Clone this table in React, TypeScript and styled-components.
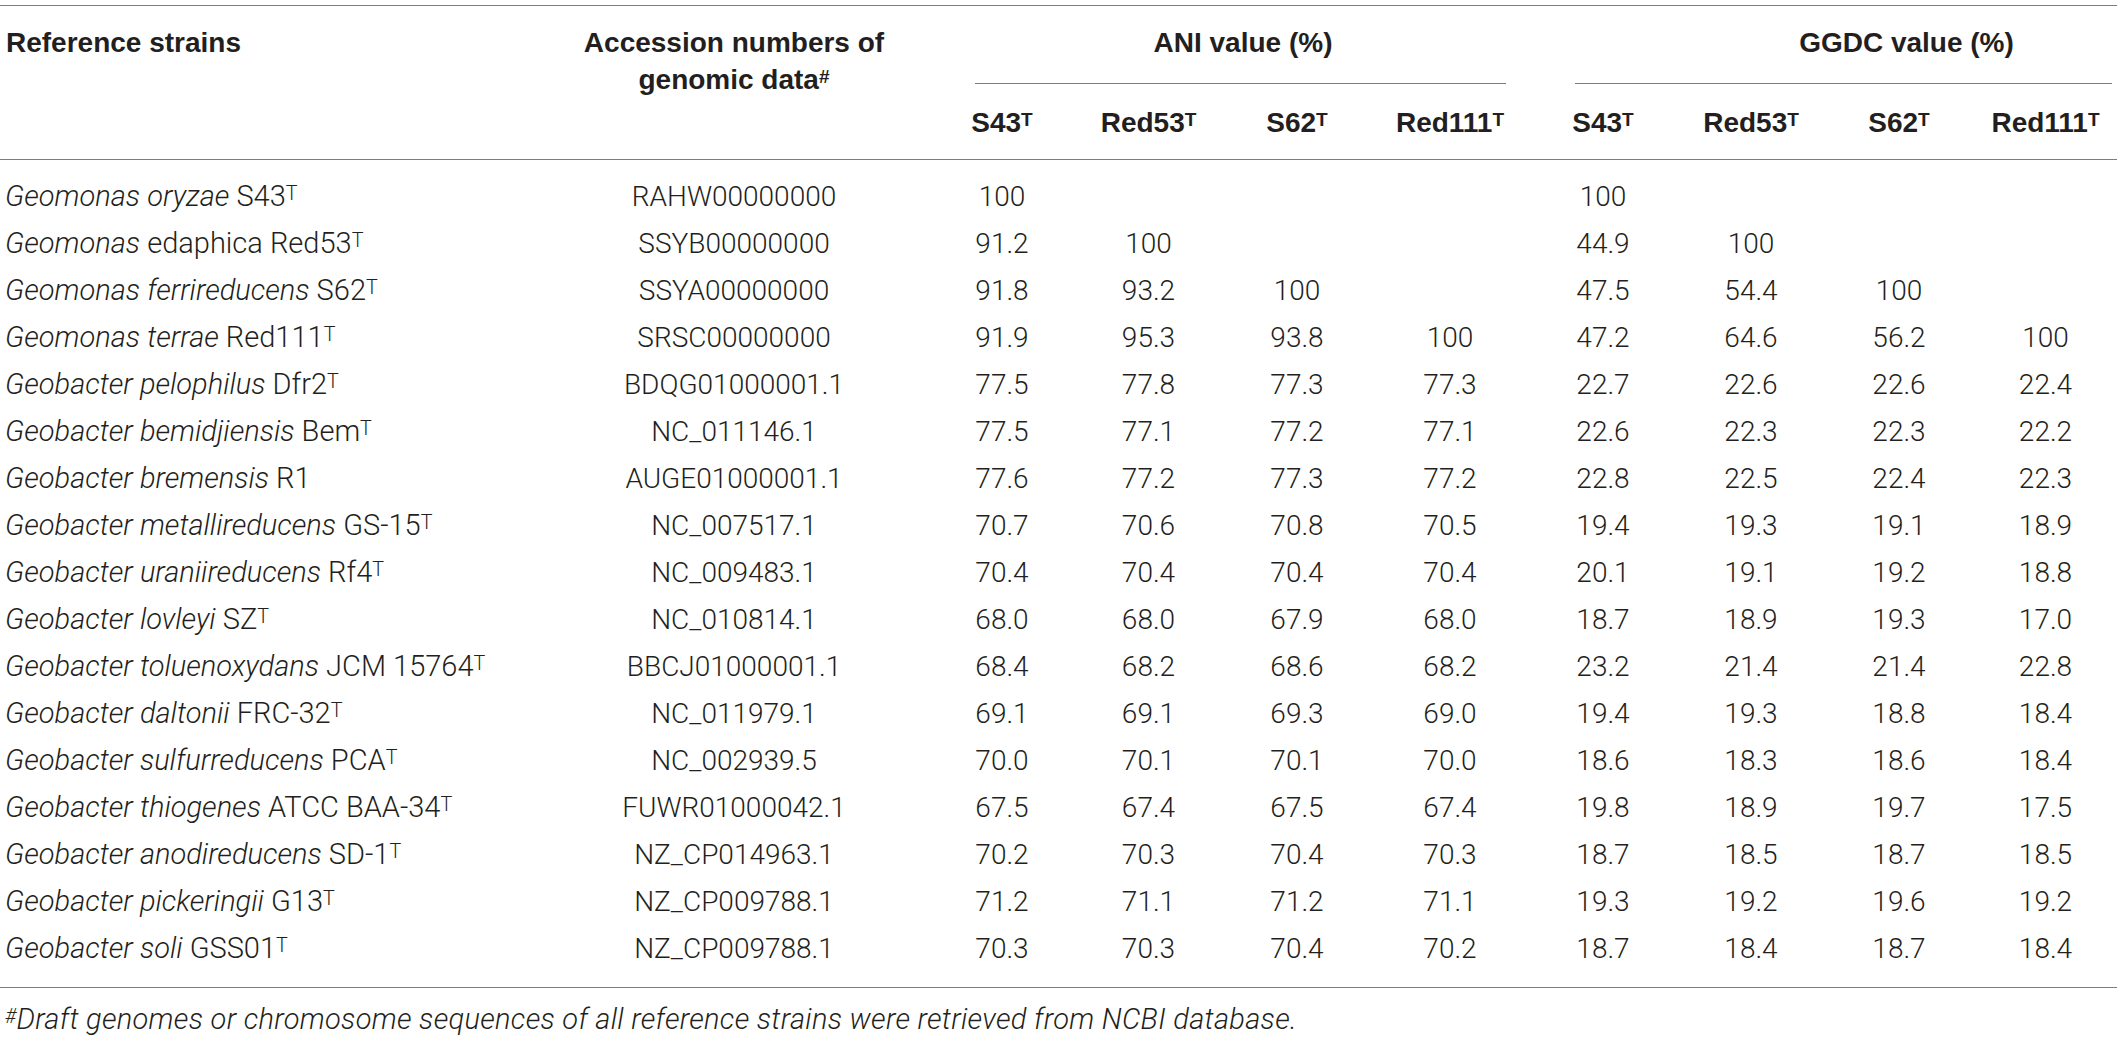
import styled, { createGlobalStyle } from "styled-components"

type Strain = {
  genus: string
  species: string
  speciesItalic: boolean
  strain: string
  typeStrain: boolean
  accession: string
  ani: string[]
  ggdc: string[]
}

const strains: Strain[] = [
  { genus: "Geomonas", species: "oryzae", speciesItalic: true, strain: "S43", typeStrain: true, accession: "RAHW00000000", ani: ["100", "", "", ""], ggdc: ["100", "", "", ""] },
  { genus: "Geomonas", species: "edaphica", speciesItalic: false, strain: "Red53", typeStrain: true, accession: "SSYB00000000", ani: ["91.2", "100", "", ""], ggdc: ["44.9", "100", "", ""] },
  { genus: "Geomonas", species: "ferrireducens", speciesItalic: true, strain: "S62", typeStrain: true, accession: "SSYA00000000", ani: ["91.8", "93.2", "100", ""], ggdc: ["47.5", "54.4", "100", ""] },
  { genus: "Geomonas", species: "terrae", speciesItalic: true, strain: "Red111", typeStrain: true, accession: "SRSC00000000", ani: ["91.9", "95.3", "93.8", "100"], ggdc: ["47.2", "64.6", "56.2", "100"] },
  { genus: "Geobacter", species: "pelophilus", speciesItalic: true, strain: "Dfr2", typeStrain: true, accession: "BDQG01000001.1", ani: ["77.5", "77.8", "77.3", "77.3"], ggdc: ["22.7", "22.6", "22.6", "22.4"] },
  { genus: "Geobacter", species: "bemidjiensis", speciesItalic: true, strain: "Bem", typeStrain: true, accession: "NC_011146.1", ani: ["77.5", "77.1", "77.2", "77.1"], ggdc: ["22.6", "22.3", "22.3", "22.2"] },
  { genus: "Geobacter", species: "bremensis", speciesItalic: true, strain: "R1", typeStrain: false, accession: "AUGE01000001.1", ani: ["77.6", "77.2", "77.3", "77.2"], ggdc: ["22.8", "22.5", "22.4", "22.3"] },
  { genus: "Geobacter", species: "metallireducens", speciesItalic: true, strain: "GS-15", typeStrain: true, accession: "NC_007517.1", ani: ["70.7", "70.6", "70.8", "70.5"], ggdc: ["19.4", "19.3", "19.1", "18.9"] },
  { genus: "Geobacter", species: "uraniireducens", speciesItalic: true, strain: "Rf4", typeStrain: true, accession: "NC_009483.1", ani: ["70.4", "70.4", "70.4", "70.4"], ggdc: ["20.1", "19.1", "19.2", "18.8"] },
  { genus: "Geobacter", species: "lovleyi", speciesItalic: true, strain: "SZ", typeStrain: true, accession: "NC_010814.1", ani: ["68.0", "68.0", "67.9", "68.0"], ggdc: ["18.7", "18.9", "19.3", "17.0"] },
  { genus: "Geobacter", species: "toluenoxydans", speciesItalic: true, strain: "JCM 15764", typeStrain: true, accession: "BBCJ01000001.1", ani: ["68.4", "68.2", "68.6", "68.2"], ggdc: ["23.2", "21.4", "21.4", "22.8"] },
  { genus: "Geobacter", species: "daltonii", speciesItalic: true, strain: "FRC-32", typeStrain: true, accession: "NC_011979.1", ani: ["69.1", "69.1", "69.3", "69.0"], ggdc: ["19.4", "19.3", "18.8", "18.4"] },
  { genus: "Geobacter", species: "sulfurreducens", speciesItalic: true, strain: "PCA", typeStrain: true, accession: "NC_002939.5", ani: ["70.0", "70.1", "70.1", "70.0"], ggdc: ["18.6", "18.3", "18.6", "18.4"] },
  { genus: "Geobacter", species: "thiogenes", speciesItalic: true, strain: "ATCC BAA-34", typeStrain: true, accession: "FUWR01000042.1", ani: ["67.5", "67.4", "67.5", "67.4"], ggdc: ["19.8", "18.9", "19.7", "17.5"] },
  { genus: "Geobacter", species: "anodireducens", speciesItalic: true, strain: "SD-1", typeStrain: true, accession: "NZ_CP014963.1", ani: ["70.2", "70.3", "70.4", "70.3"], ggdc: ["18.7", "18.5", "18.7", "18.5"] },
  { genus: "Geobacter", species: "pickeringii", speciesItalic: true, strain: "G13", typeStrain: true, accession: "NZ_CP009788.1", ani: ["71.2", "71.1", "71.2", "71.1"], ggdc: ["19.3", "19.2", "19.6", "19.2"] },
  { genus: "Geobacter", species: "soli", speciesItalic: true, strain: "GSS01", typeStrain: true, accession: "NZ_CP009788.1", ani: ["70.3", "70.3", "70.4", "70.2"], ggdc: ["18.7", "18.4", "18.7", "18.4"] },
]

const subHeads = ["S43", "Red53", "S62", "Red111"]

const App = () => {
  return (
    <>
      <GlobalStyle />
      <Page>
        <Header>
          <StrainHead>Reference strains</StrainHead>
          <AccessionHead>
            Accession numbers of
            <br />
            genomic data<Sup>#</Sup>
          </AccessionHead>
          <GroupHead $column={3} $insetLeft={46} $insetRight={22}>
            <GroupTitle $shift={5}>ANI value (%)</GroupTitle>
          </GroupHead>
          <GroupHead $column={7} $insetLeft={47} $insetRight={5}>
            <GroupTitle $shift={126}>GGDC value (%)</GroupTitle>
          </GroupHead>
          {[...subHeads, ...subHeads].map((name, i) => (
            <SubHead key={i}>
              {name}
              <Sup>T</Sup>
            </SubHead>
          ))}
        </Header>

        <Body>
          {strains.map((s) => (
            <Row key={s.strain + s.species}>
              <NameCell>
                <i>{s.genus}</i>{" "}
                {s.speciesItalic ? <i>{s.species}</i> : s.species} {s.strain}
                {s.typeStrain && <Sup>T</Sup>}
              </NameCell>
              <Cell>{s.accession}</Cell>
              {[...s.ani, ...s.ggdc].map((v, i) => (
                <Cell key={i}>{v}</Cell>
              ))}
            </Row>
          ))}
        </Body>

        <Footnote>
          <Sup>#</Sup>Draft genomes or chromosome sequences of all reference strains were retrieved from NCBI database.
        </Footnote>
      </Page>
    </>
  )
}

export default App

const columns = "539px 390px 146px 147px 150px 156px 150px 146px 150px 143px"

const GlobalStyle = createGlobalStyle`
  html, body {
    margin: 0;
    padding: 0;
    background: #ffffff;
  }

  body {
    font-family: "Liberation Sans", Arial, sans-serif;
    font-size: 28px;
    color: #231f20;
  }
`

const Page = styled.div`
  width: 2117px;
  padding-top: 5px;
`

const Header = styled.div`
  display: grid;
  grid-template-columns: ${columns};
  grid-template-rows: auto auto;
  border-top: 1px solid #7d7d7d;
  border-bottom: 1px solid #7d7d7d;
  font-weight: 700;
  line-height: 37px;
`

const StrainHead = styled.div`
  grid-column: 1;
  grid-row: 1 / span 2;
  padding: 18px 0 0 6px;
`

const AccessionHead = styled.div`
  grid-column: 2;
  grid-row: 1 / span 2;
  padding-top: 18px;
  text-align: center;
`

const GroupHead = styled.div<{ $column: number; $insetLeft: number; $insetRight: number }>`
  grid-column: ${(p) => p.$column} / span 4;
  grid-row: 1;
  padding: 18px ${(p) => p.$insetRight}px 0 ${(p) => p.$insetLeft}px;
`

const GroupTitle = styled.div<{ $shift: number }>`
  padding: 0 0 22px ${(p) => p.$shift}px;
  text-align: center;
  border-bottom: 1px solid #7d7d7d;
`

const SubHead = styled.div`
  grid-row: 2;
  padding: 20px 0 18px;
  text-align: center;
  white-space: nowrap;
`

const Body = styled.div`
  padding: 13px 0 15px;
  border-bottom: 1px solid #7d7d7d;
`

const Row = styled.div`
  display: grid;
  grid-template-columns: ${columns};
  height: 47px;
  line-height: 47px;
  font-family: Roboto, "Liberation Sans", sans-serif;
  font-weight: 300;
  color: #231f20;
`

const NameCell = styled.div`
  padding-left: 5px;
  font-size: 29px;
  white-space: nowrap;
`

const Cell = styled.div`
  text-align: center;
  white-space: nowrap;
`

const Sup = styled.sup`
  font-size: 0.68em;
  line-height: 0;
  vertical-align: 0.3em;
`

const Footnote = styled.div`
  padding: 13px 0 0 5px;
  line-height: 37px;
  font-family: Roboto, "Liberation Sans", sans-serif;
  font-size: 29px;
  font-weight: 300;
  font-style: italic;
  letter-spacing: 0.3px;
  color: #231f20;
  white-space: nowrap;
`
